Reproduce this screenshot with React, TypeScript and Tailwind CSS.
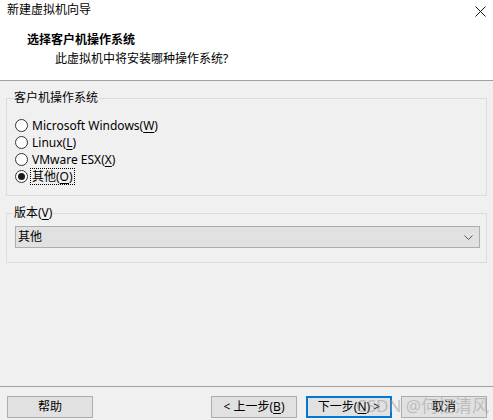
import React from "react";

const font = { fontFamily: '"Noto Sans", "Noto Sans CJK SC", sans-serif' };

function U({ children }: { children: React.ReactNode }) {
  return <span className="underline underline-offset-[2px]">{children}</span>;
}

function Radio({ checked, label, focus }: { checked?: boolean; label: React.ReactNode; focus?: boolean }) {
  return (
    <div className="flex h-[17px] items-center">
      <span className="flex h-[13px] w-[13px] items-center justify-center rounded-full border border-[#333333] bg-white">
        {checked && <span className="h-[7px] w-[7px] rounded-full bg-[#1a1a1a]" />}
      </span>
      <span
        className={
          "ml-[2px] px-[1px] leading-[15px] " +
          (focus ? "border border-dotted border-black" : "border border-transparent")
        }
      >
        {label}
      </span>
    </div>
  );
}

function Btn({ children, def }: { children: React.ReactNode; def?: boolean }) {
  return (
    <div
      className={
        "flex h-[22px] w-[86px] items-center justify-center bg-[#e1e1e1] text-[12px] " +
        (def ? "border-2 border-[#0078d7]" : "border border-[#adadad]")
      }
    >
      {children}
    </div>
  );
}

export default function App() {
  return (
    <div className="relative flex h-[420px] w-[493px] flex-col overflow-hidden bg-[#f0f0f0] text-[12px] text-black" style={font}>
      <div className="h-[81px] border-b border-[#a0a0a0] bg-white">
        <div className="flex items-center justify-between pl-[7px] pr-[7px] pt-[2px]">
          <span className="leading-[16px]">新建虚拟机向导</span>
          <svg width="11" height="11" viewBox="0 0 11 11" className="mt-[3px]">
            <path d="M0.5 0.5 L10.5 10.5 M10.5 0.5 L0.5 10.5" stroke="#111" strokeWidth="1" fill="none" />
          </svg>
        </div>
        <div className="mt-[14px] pl-[27px] font-bold leading-[16px]">选择客户机操作系统</div>
        <div className="mt-[3px] pl-[55px] leading-[16px]">此虚拟机中将安装哪种操作系统?</div>
      </div>

      <fieldset className="mx-[6px] mt-[9px] border border-[#dcdcdc] pb-[10px] pl-[8px] pr-[7px] pt-[11px]">
        <legend className="-ml-[2px] px-[1px] leading-[16px]">客户机操作系统</legend>
        <Radio label={<>Microsoft Windows(<U>W</U>)</>} />
        <Radio label={<>Linux(<U>L</U>)</>} />
        <Radio label={<>VMware ESX(<U>X</U>)</>} />
        <Radio checked focus label={<>其他(<U>O</U>)</>} />
      </fieldset>

      <fieldset className="mx-[6px] mt-[9px] border border-[#dcdcdc] pb-[14px] pl-[8px] pr-[6px] pt-[5px]">
        <legend className="-ml-[2px] px-[1px] leading-[16px]">
          版本(<U>V</U>)
        </legend>
        <div className="flex h-[22px] items-center justify-between border border-[#adadad] bg-[#e1e1e1] pl-[2px] pr-[6px]">
          <span>其他</span>
          <svg width="9" height="5" viewBox="0 0 9 5">
            <path d="M0.5 0.5 L4.5 4.5 L8.5 0.5" stroke="#555" strokeWidth="1" fill="none" />
          </svg>
        </div>
      </fieldset>

      <div className="flex-1" />

      <div className="flex h-[34px] items-start border-t border-[#a0a0a0] pl-[7px] pr-[6px] pt-[9px]">
        <Btn>帮助</Btn>
        <div className="flex-1" />
        <div className="flex gap-[9px]">
          <Btn>&lt; 上一步(<U>B</U>)</Btn>
          <Btn def>下一步(<U>N</U>) &gt;</Btn>
          <Btn>取消</Btn>
        </div>
      </div>

      <div className="pointer-events-none absolute left-[356px] top-[396px] text-[17px] leading-[20px] text-[rgba(150,150,150,0.5)]">
        CSDN @何忆清风
      </div>
    </div>
  );
}
